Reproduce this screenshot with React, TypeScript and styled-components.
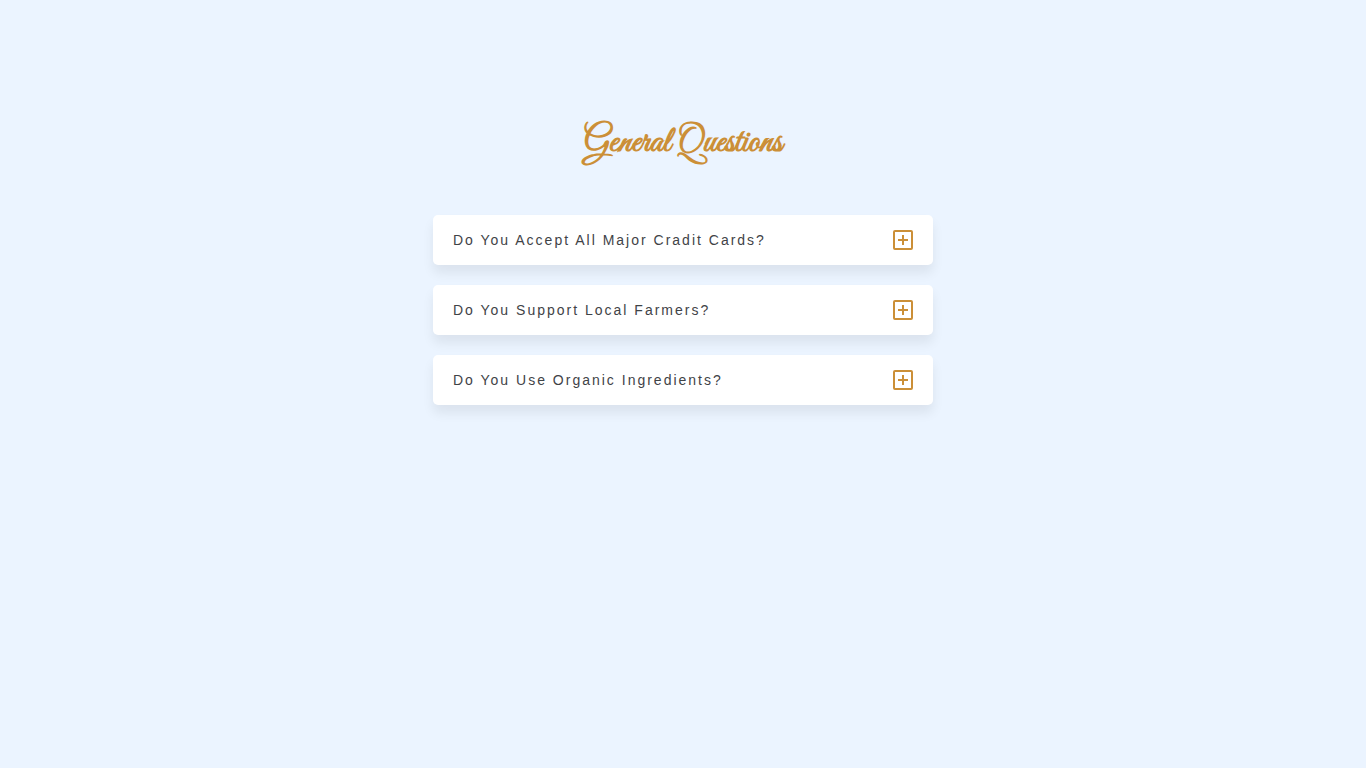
import React, { useState } from "react";
import styled, { createGlobalStyle } from "styled-components";

const GlobalStyle = createGlobalStyle`
  *, *::before, *::after { box-sizing: border-box; }
  body {
    margin: 0;
    background: #ebf4ff;
    color: #3f4347;
    font-family: Arial, "Liberation Sans", sans-serif;
    font-size: 14px;
    line-height: 20px;
  }
`;

const Section = styled.main`
  width: 100%;
  max-width: 540px;
  margin: 0 auto;
  padding: 113px 20px 64px;
`;

const Title = styled.h1`
  margin: 0 0 42px;
  color: #cb8f37;
  font-family: "Great Vibes", "Liberation Serif", cursive;
  font-size: 36px;
  font-weight: 700;
  line-height: 60px;
  text-align: center;
  white-space: nowrap;
`;

const Questions = styled.div`
  display: flex;
  flex-direction: column;
  gap: 20px;
`;

const Card = styled.article`
  background: #fff;
  border-radius: 5px;
  box-shadow: 0 8px 12px rgba(0, 0, 0, 0.07);
`;

const Heading = styled.h2`
  margin: 0;
  font: inherit;
`;

const Toggle = styled.button`
  display: flex;
  align-items: center;
  justify-content: space-between;
  gap: 16px;
  width: 100%;
  padding: 15px 20px;
  border: 0;
  background: transparent;
  color: inherit;
  font: inherit;
  letter-spacing: 2px;
  text-align: left;
  cursor: pointer;
`;

const Icon = styled.svg`
  display: block;
  flex: none;
  width: 20px;
  height: 20px;
  color: #cb8f37;
`;

const Answer = styled.p`
  margin: 0;
  padding: 0 20px 15px;
`;

const items = [
  {
    question: "Do You Accept All Major Cradit Cards?",
    answer: "Yes, all major cards are accepted.",
  },
  {
    question: "Do You Support Local Farmers?",
    answer: "Yes, we buy from farms in the area.",
  },
  {
    question: "Do You Use Organic Ingredients?",
    answer: "Yes, our ingredients are organic.",
  },
];

function Question({ question, answer }: { question: string; answer: string }) {
  const [open, setOpen] = useState(false);
  return (
    <Card>
      <Heading>
        <Toggle type="button" aria-expanded={open} onClick={() => setOpen(!open)}>
          {question}
          <Icon viewBox="0 0 20 20" fill="none" stroke="currentColor" strokeWidth="2" aria-hidden="true">
            <rect x="1" y="1" width="18" height="18" rx="1" />
            <path d={open ? "M5 10h10" : "M5 10h10M10 5v10"} />
          </Icon>
        </Toggle>
      </Heading>
      {open && <Answer>{answer}</Answer>}
    </Card>
  );
}

export default function App() {
  return (
    <>
      <GlobalStyle />
      <Section>
        <Title>General Questions</Title>
        <Questions>
          {items.map((item) => (
            <Question key={item.question} {...item} />
          ))}
        </Questions>
      </Section>
    </>
  );
}
